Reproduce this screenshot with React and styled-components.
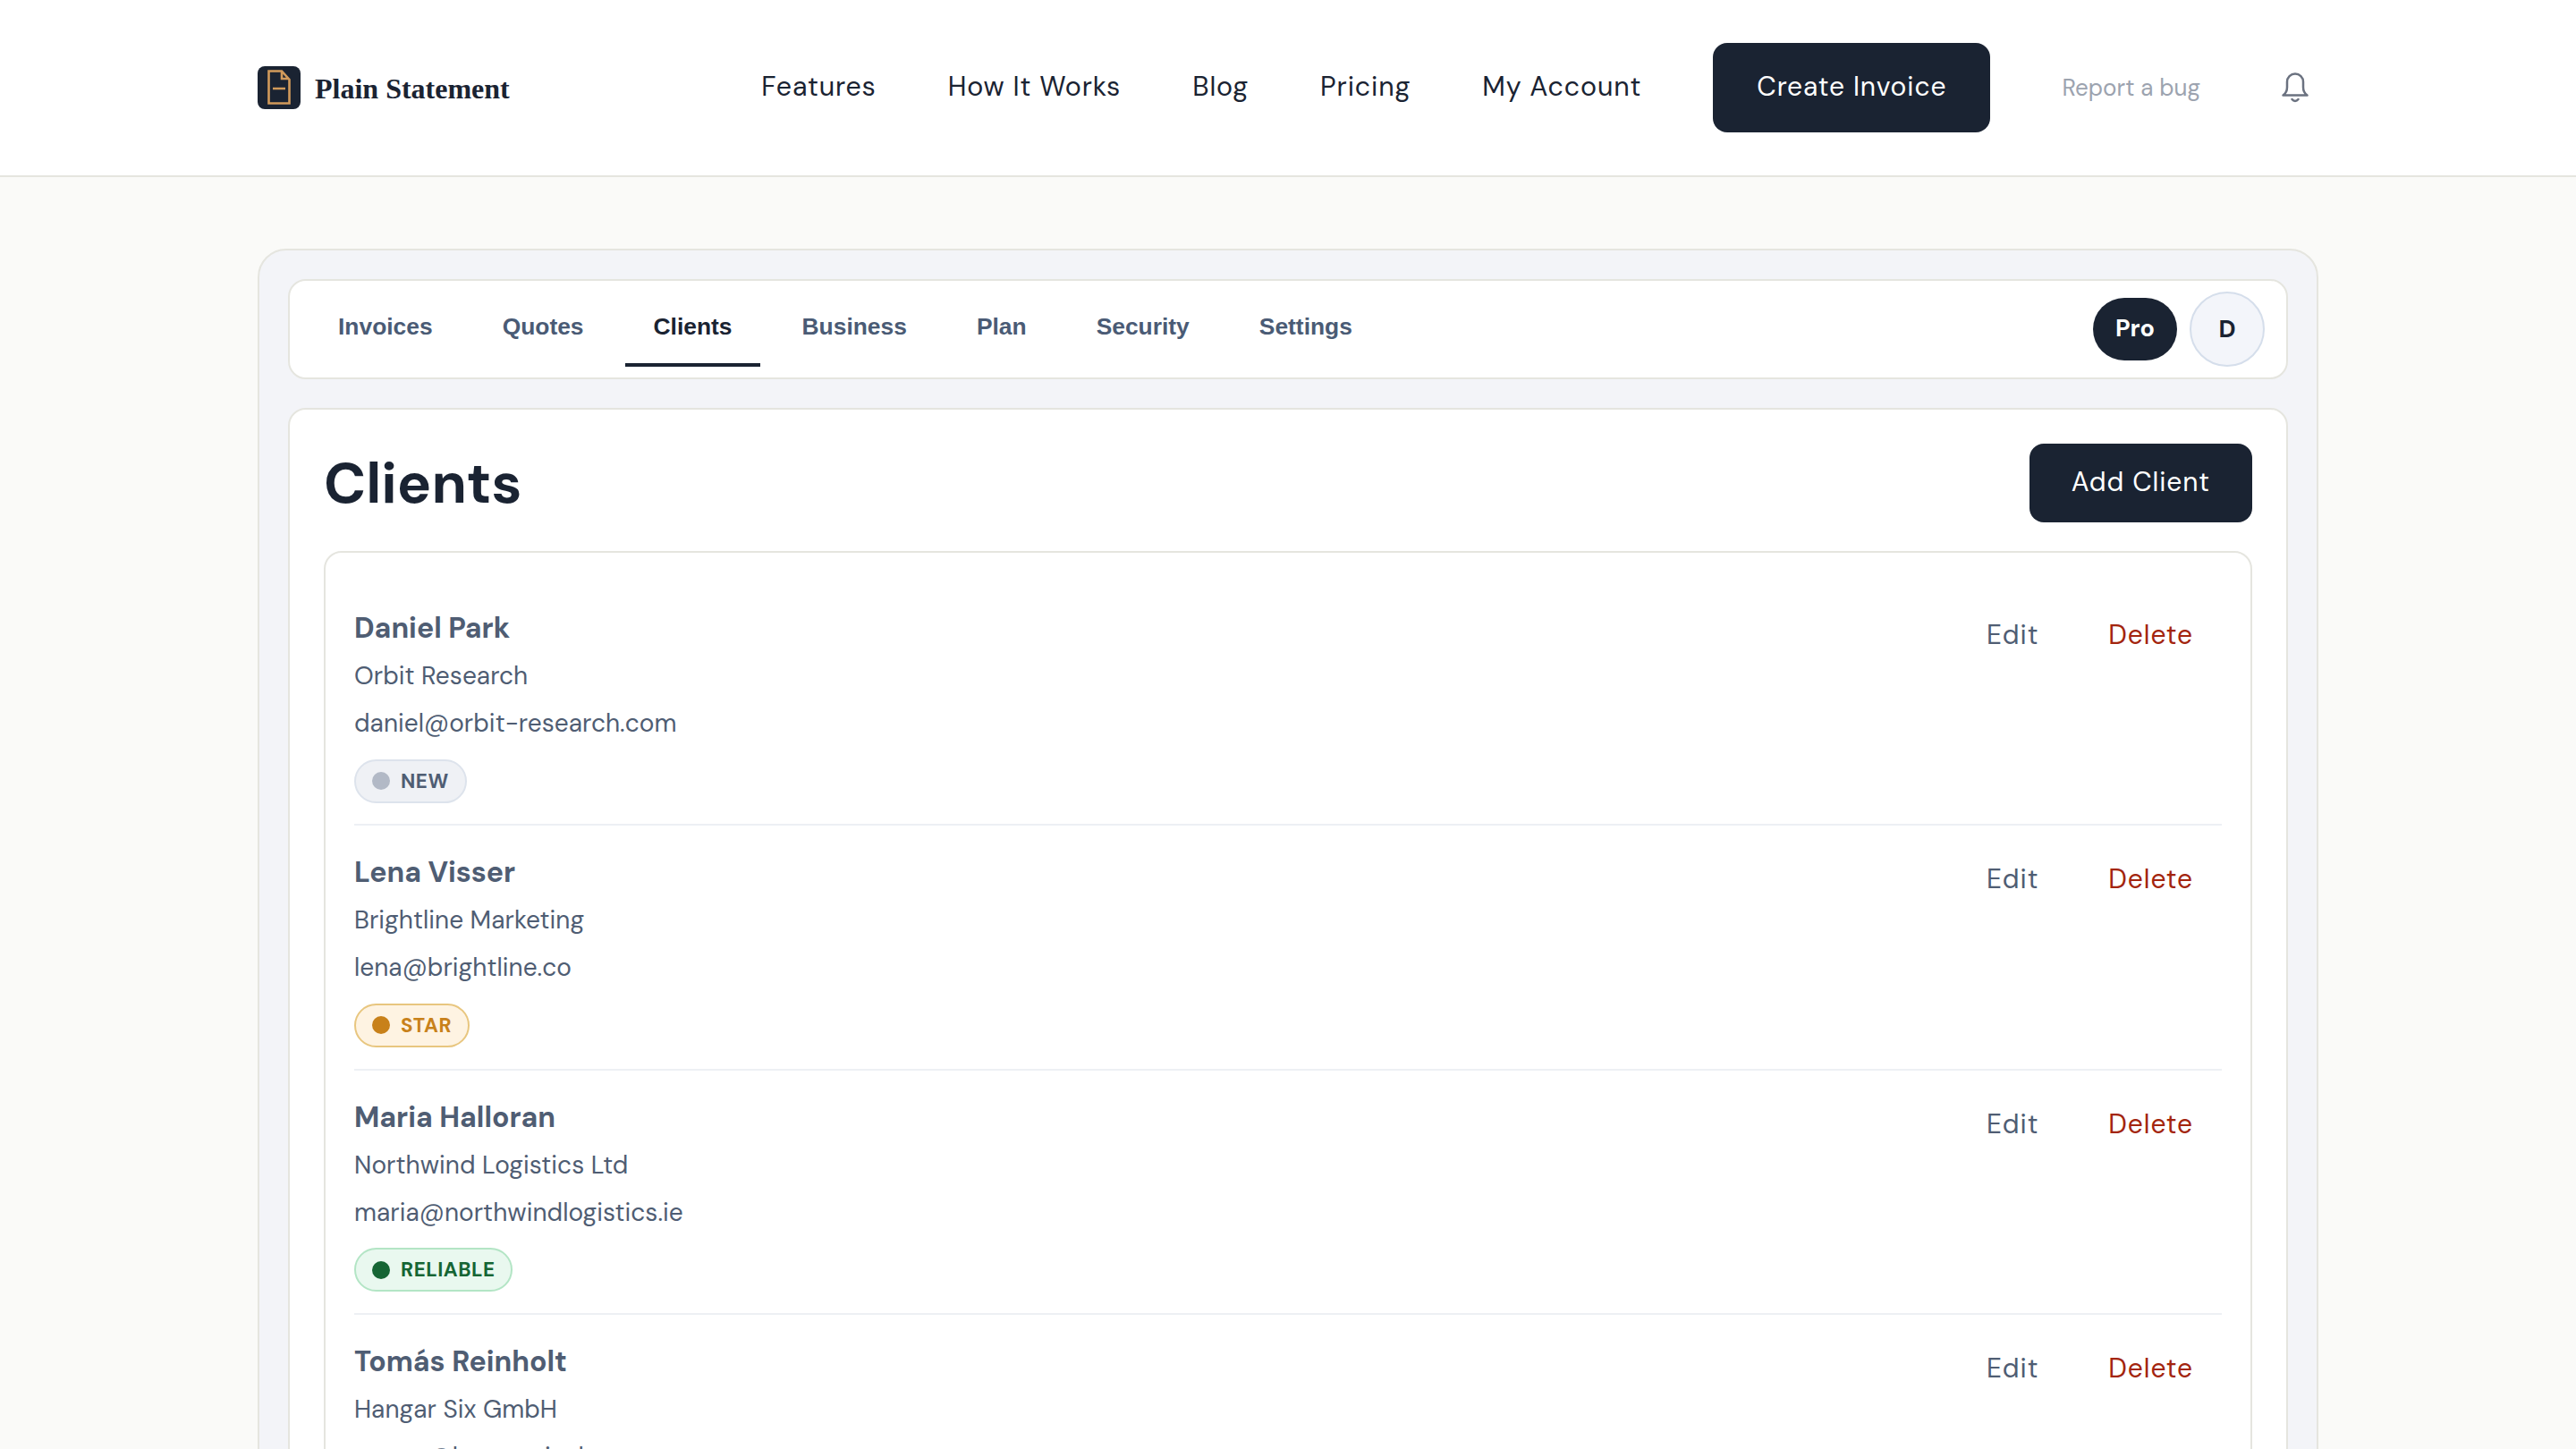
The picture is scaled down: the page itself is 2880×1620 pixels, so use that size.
import React from 'react'
import styled, { createGlobalStyle } from 'styled-components'

const sans = `"DM Sans", Lato, "Noto Sans", sans-serif`

const clients = [
  { name: 'Daniel Park', company: 'Orbit Research', email: 'daniel@orbit-research.com', tag: 'new' },
  { name: 'Lena Visser', company: 'Brightline Marketing', email: 'lena@brightline.co', tag: 'star' },
  { name: 'Maria Halloran', company: 'Northwind Logistics Ltd', email: 'maria@northwindlogistics.ie', tag: 'reliable' },
  { name: 'Tomás Reinholt', company: 'Hangar Six GmbH', email: 'tomas@hangarsix.de' },
]

const tagColors = {
  new: { bg: '#eff1f5', line: '#dde3ec', dot: '#b2b9c6', text: '#4f5d73' },
  star: { bg: '#fef3e2', line: '#e8c67f', dot: '#c8811a', text: '#c8811a' },
  reliable: { bg: '#e9f8ef', line: '#b3e5c5', dot: '#166534', text: '#166534' },
}

const Global = createGlobalStyle`
  html, body { margin: 0; height: 100%; overflow: hidden; }
  body { background: #fafaf8; font-family: ${sans}; color: #1a2332; }
  * { box-sizing: border-box; }
`

const Header = styled.header`
  height: 198px;
  background: #fff;
  border-bottom: 2px solid #e5e5df;
  padding: 0 288px;
  display: flex;
  align-items: center;
  justify-content: space-between;
`
const Logo = styled.div`
  display: flex;
  align-items: center;
  gap: 16px;
  font: bold 32px "Liberation Serif", serif;
  color: #1a2332;
`
const LogoText = styled.span`
  margin-top: 2px;
`
const Nav = styled.nav`
  display: flex;
  align-items: center;
  gap: 80px;
`
const NavLink = styled.a`
  font-size: 30.4px;
  letter-spacing: 0.85px;
  color: #1a2332;
  margin-top: -4px;
`
const PrimaryButton = styled.button`
  border: 0;
  background: #1a2332;
  color: #fff;
  font-family: ${sans};
  font-size: 30px;
  letter-spacing: 0.9px;
  border-radius: 16px;
  height: ${p => p.$tall ? '100px' : '88px'};
  padding: 0 ${p => p.$tall ? '49px' : '47px'} 4px;
`
const BugLink = styled.a`
  font-size: 26px;
  color: #9ca3af;
`
const BellButton = styled.span`
  display: flex;
  padding: 8px;
`
const Panel = styled.main`
  margin: 80px 288px 0;
  background: #f3f4f8;
  border: 2px solid #e5e5df;
  border-radius: 32px;
  padding: 32px;
  display: flex;
  flex-direction: column;
  gap: 32px;
`
const TabBar = styled.div`
  height: 112px;
  background: #fff;
  border: 2px solid #e5e5df;
  border-radius: 20px;
  padding: 0 24px 0 22.5px;
  display: flex;
  align-items: center;
  justify-content: space-between;
`
const Tabs = styled.div`
  display: flex;
  gap: 15px;
  height: 96px;
  align-self: flex-start;
`
const Tab = styled.a`
  display: flex;
  align-items: center;
  padding: 10px 31.5px 0;
  font: bold 26.4px "Liberation Sans", sans-serif;
  color: ${p => p.$active ? '#1a2332' : '#4a5b75'};
  border-bottom: 4px solid ${p => p.$active ? '#1a2332' : 'transparent'};
`
const Account = styled.div`
  display: flex;
  align-items: center;
  gap: 14px;
`
const Pill = styled.span`
  height: 70px;
  width: 94px;
  padding-bottom: 3px;
  border-radius: 35px;
  background: #1a2332;
  color: #fff;
  font-size: 27px;
  font-weight: 700;
  display: flex;
  align-items: center;
  justify-content: center;
`
const Avatar = styled.span`
  width: 84px;
  height: 84px;
  padding-bottom: 2px;
  border-radius: 50%;
  background: #f3f5fa;
  border: 2px solid #d5deeb;
  font-size: 27px;
  font-weight: 700;
  display: flex;
  align-items: center;
  justify-content: center;
`
const Card = styled.section`
  background: #fff;
  border: 2px solid #e5e5df;
  border-radius: 20px;
  padding: 38px;
`
const CardHead = styled.div`
  height: 88px;
  display: flex;
  align-items: center;
  justify-content: space-between;
  margin-bottom: 32px;
`
const Title = styled.h1`
  margin: 2px 0 0;
  font-size: 64px;
  font-weight: 700;
  line-height: 80px;
`
const List = styled.div`
  border: 2px solid #e5e5df;
  border-radius: 20px;
  padding: 32px 32px 0;
`
const Row = styled.div`
  display: flex;
  justify-content: space-between;
  align-items: flex-start;
  padding: 31px 0 23.8px;
  border-bottom: 2px solid #edf0f4;
`
const Name = styled.div`
  font-size: 32px;
  font-weight: 700;
  line-height: 42px;
  color: #4f5d73;
`
const Detail = styled.div`
  font-size: 28px;
  letter-spacing: 0.05px;
  line-height: 40px;
  color: #4f5d73;
  margin-top: 13px;
`
const Tag = styled.span`
  display: inline-flex;
  align-items: center;
  gap: 12px;
  height: 49px;
  margin-top: 19.5px;
  padding: 0 18px;
  border-radius: 25px;
  font-size: 22.4px;
  letter-spacing: 0.5px;
  font-weight: 700;
  background: ${p => tagColors[p.$tag].bg};
  border: 2px solid ${p => tagColors[p.$tag].line};
  color: ${p => tagColors[p.$tag].text};
`
const Dot = styled.i`
  width: 20px;
  height: 20px;
  border-radius: 50%;
  background: ${p => tagColors[p.$tag].dot};
`
const Actions = styled.div`
  display: flex;
  gap: 14px;
  margin-top: 9px;
`
const RowButton = styled.button`
  border: 0;
  background: none;
  padding: 0 32px;
  font-family: ${sans};
  font-size: 30px;
  letter-spacing: 0.9px;
  color: ${p => p.$danger ? '#a3250e' : '#4f5d73'};
`

function Bell() {
  return (
    <svg width="36" height="36" viewBox="0 0 36 36" fill="none" stroke="#6b7280" strokeWidth="2.5" strokeLinecap="round" strokeLinejoin="round">
      <path d="M4.5 26.5c3-2 4.5-5 4.5-9v-6a9 9 0 0 1 18 0v6c0 4 1.5 7 4.5 9z" />
      <path d="M14.5 31c2 2.5 5 2.5 7 0" />
    </svg>
  )
}

function LogoMark() {
  return (
    <svg width="48" height="48" viewBox="0 0 48 48">
      <rect width="48" height="48" rx="8" fill="#1a2332" />
      <path d="M12.5 5.5H27L35.5 15V41.5H12.5Z M27 6V14H35 M17 25H31" fill="none" stroke="#d19a5b" strokeWidth="2.6" />
    </svg>
  )
}

export default function App() {
  return (
    <>
      <Global />
      <Header>
        <Logo><LogoMark /><LogoText>Plain Statement</LogoText></Logo>
        <Nav>
          <NavLink>Features</NavLink>
          <NavLink>How It Works</NavLink>
          <NavLink>Blog</NavLink>
          <NavLink>Pricing</NavLink>
          <NavLink>My Account</NavLink>
          <PrimaryButton $tall>Create Invoice</PrimaryButton>
          <BugLink>Report a bug</BugLink>
          <BellButton><Bell /></BellButton>
        </Nav>
      </Header>
      <Panel>
        <TabBar>
          <Tabs>
            {['Invoices', 'Quotes', 'Clients', 'Business', 'Plan', 'Security', 'Settings'].map(t => (
              <Tab key={t} $active={t === 'Clients'}>{t}</Tab>
            ))}
          </Tabs>
          <Account><Pill>Pro</Pill><Avatar>D</Avatar></Account>
        </TabBar>
        <Card>
          <CardHead>
            <Title>Clients</Title>
            <PrimaryButton>Add Client</PrimaryButton>
          </CardHead>
          <List>
            {clients.map(c => (
              <Row key={c.email}>
                <div>
                  <Name>{c.name}</Name>
                  <Detail>{c.company}</Detail>
                  <Detail>{c.email}</Detail>
                  {c.tag && <Tag $tag={c.tag}><Dot $tag={c.tag} />{c.tag.toUpperCase()}</Tag>}
                </div>
                <Actions>
                  <RowButton>Edit</RowButton>
                  <RowButton $danger>Delete</RowButton>
                </Actions>
              </Row>
            ))}
          </List>
        </Card>
      </Panel>
    </>
  )
}
